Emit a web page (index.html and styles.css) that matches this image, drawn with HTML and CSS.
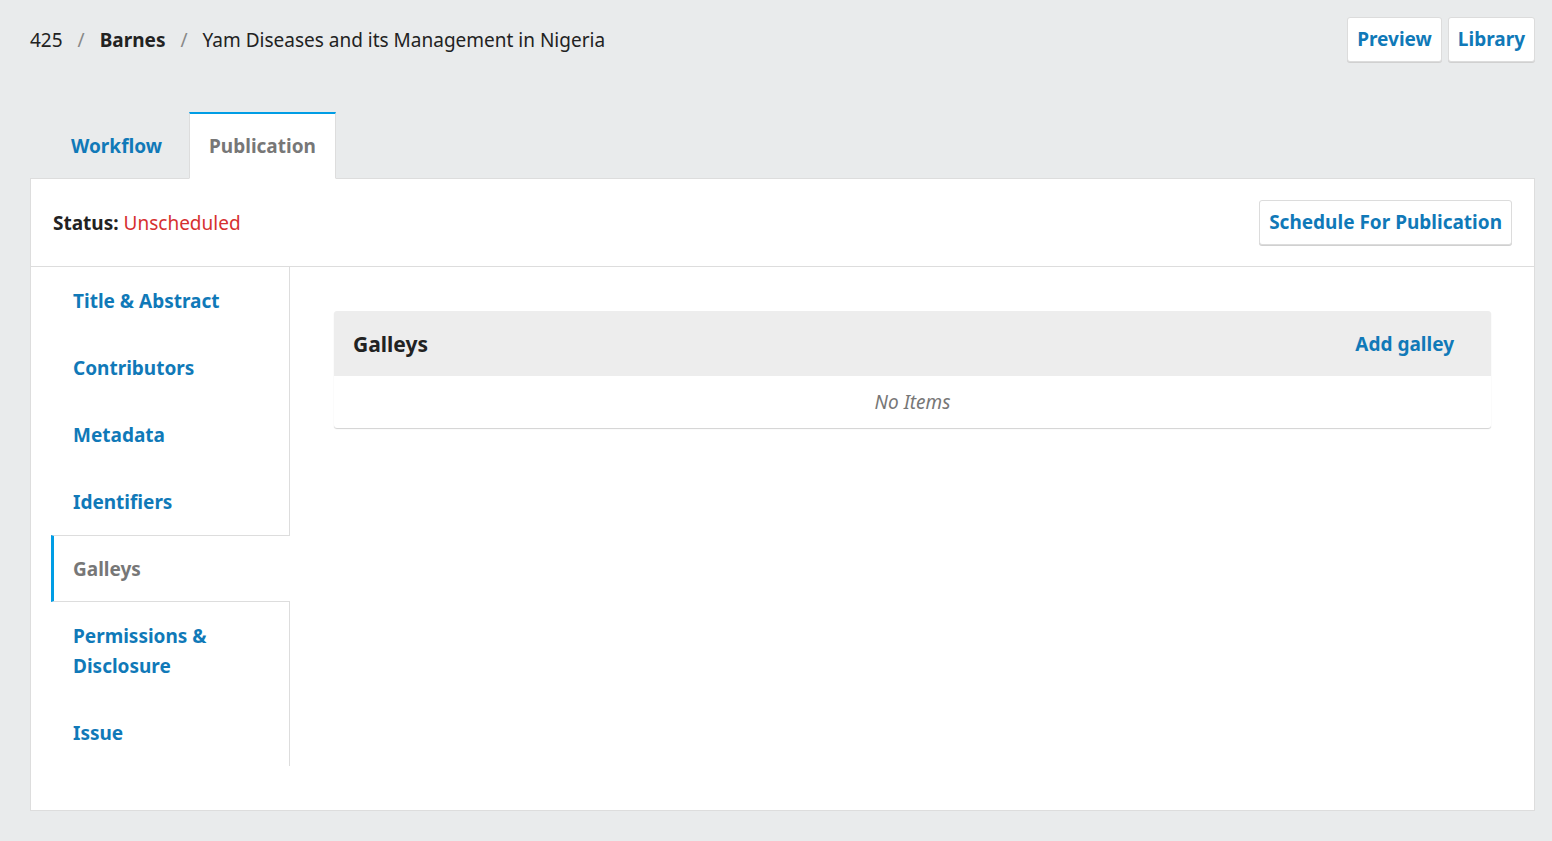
FILE: index.html
```html
<!DOCTYPE html>
<html>
<head>
<meta charset="utf-8">
<link rel="stylesheet" href="styles.css">
</head>
<body>
<div class="page">
  <header class="top">
    <nav class="crumbs">
      <span>425</span><span class="sep">/</span><strong>Barnes</strong><span class="sep">/</span><span>Yam Diseases and its Management in Nigeria</span>
    </nav>
    <div class="actions">
      <button class="btn">Preview</button>
      <button class="btn">Library</button>
    </div>
  </header>
  <div class="tabs">
    <a class="tab">Workflow</a>
    <a class="tab active">Publication</a>
  </div>
  <section class="panel">
    <div class="status">
      <div class="status-text"><strong>Status:</strong> <span class="unsched">Unscheduled</span></div>
      <button class="btn">Schedule For Publication</button>
    </div>
    <div class="body">
      <ul class="side">
        <li class="item">Title &amp; Abstract</li>
        <li class="item">Contributors</li>
        <li class="item">Metadata</li>
        <li class="item">Identifiers</li>
        <li class="item current">Galleys</li>
        <li class="item">Permissions &amp;<br>Disclosure</li>
        <li class="item">Issue</li>
      </ul>
      <div class="content">
        <div class="grid">
          <div class="grid-head">
            <h2>Galleys</h2>
            <a class="grid-action">Add galley</a>
          </div>
          <div class="grid-empty">No Items</div>
        </div>
      </div>
    </div>
  </section>
</div>
</body>
</html>
```

FILE: styles.css
```css
html, body {
  margin: 0;
  padding: 0;
  background: #e9ebec;
}
body {
  font-family: "Noto Sans", "Open Sans", sans-serif;
  font-size: 19px;
  line-height: 30px;
  color: #222;
}
.page {
  padding: 17px 17px 29px 30px;
}
.top {
  display: flex;
  justify-content: space-between;
  align-items: center;
  height: 45px;
}
.crumbs {
  display: flex;
  align-items: center;
  color: #222;
  padding-top: 1px;
}
.crumbs strong { font-weight: 700; }
.sep {
  color: #888;
  margin: 0 15px;
}
.actions {
  display: flex;
  gap: 6px;
}
.btn {
  font-family: inherit;
  font-size: 19px;
  line-height: 30px;
  font-weight: 700;
  color: #1079b8;
  background: #fff;
  border: 1px solid #dcdcdc;
  border-radius: 3px;
  box-shadow: 0 1px 0 #d0d0d0;
  padding: 6px 9px 7px;
  height: 45px;
  cursor: pointer;
}
.tabs {
  display: flex;
  gap: 7px;
  margin-top: 50px;
  padding-left: 21px;
  position: relative;
  z-index: 1;
}
.tab {
  display: block;
  padding: 16.5px 19px 17.5px;
  border-top: 2px solid transparent;
  font-weight: 700;
  color: #1079b8;
  margin-bottom: -1px;
  border-bottom: 1px solid transparent;
}
.tab:first-child {
  padding-left: 20px;
  padding-right: 20px;
}
.tab.active {
  background: #fff;
  color: #777;
  border-top-color: #009de5;
  border-left: 1px solid #ddd;
  border-right: 1px solid #ddd;
  border-bottom-color: #fff;
}
.panel {
  background: #fff;
  border: 1px solid #dddddd;
  padding-bottom: 44px;
}
.status {
  display: flex;
  justify-content: space-between;
  align-items: center;
  padding: 21px 22px 21px 22px;
  border-bottom: 1px solid #ddd;
}
.status-text strong { font-weight: 700; }
.unsched { color: #d6302f; }
.body {
  display: flex;
  align-items: flex-start;
}
.side {
  list-style: none;
  margin: 0;
  padding: 0 0 0 20px;
  width: 238px;
  border-right: 1px solid #ddd;
  flex: none;
}
.item {
  padding: 17.5px 20px 17.5px 19px;
  border-top: 1px solid transparent;
  border-bottom: 1px solid transparent;
  border-left: 3px solid transparent;
  font-weight: 700;
  color: #1079b8;
  margin-right: -1px;
}
.item.current {
  color: #777;
  border-left-color: #009de5;
  border-top-color: #ddd;
  border-bottom-color: #ddd;
  background: #fff;
}
.content {
  flex: 1;
  padding: 44px 43px 0 44px;
}
.grid {
  border-radius: 3px;
  box-shadow: 0 1px 1px rgba(0,0,0,0.18);
  overflow: hidden;
}
.grid-head {
  display: flex;
  justify-content: space-between;
  align-items: center;
  background: #ededed;
  height: 65px;
  padding: 0 37px 0 19px;
}
.grid-head h2 {
  margin: 0;
  font-size: 21px;
  font-weight: 700;
  color: #222;
}
.grid-action {
  font-weight: 700;
  color: #1079b8;
}
.grid-empty {
  text-align: center;
  font-style: italic;
  color: #777;
  padding: 11px 0;
  font-size: 19px;
}
```
